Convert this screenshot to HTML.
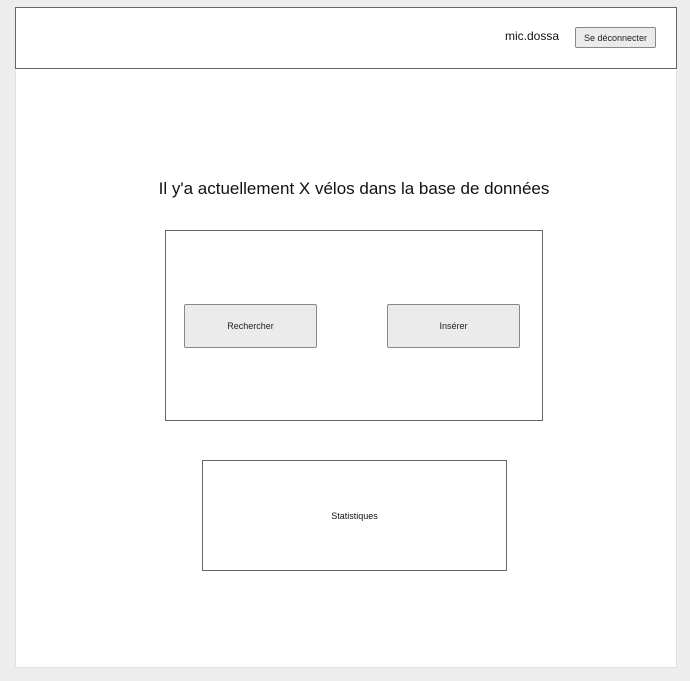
<!DOCTYPE html>
<html><head><style>
body{margin:0;width:690px;height:681px;background:#ededed;font-family:"Liberation Sans",sans-serif;position:relative;overflow:hidden}
div{position:absolute;box-sizing:border-box}
.page{left:15px;top:68px;width:662px;height:600px;background:#fff;border:1px solid #e2e2e2;border-top:none}
.hdr{left:15px;top:7px;width:662px;height:62px;background:#fff;border:1px solid #666}
.btn{background:#ebebeb;border:1px solid #888;border-radius:2px;display:flex;align-items:center;justify-content:center;color:#222}
.box{border:1px solid #666;background:#fff}
</style></head><body>
<div class="page"></div>
<div class="hdr"></div>
<div style="left:505px;top:29px;font-size:12px;color:#111">mic.dossa</div>
<div class="btn" style="left:575px;top:27px;width:81px;height:21px;font-size:9px">Se déconnecter</div>
<div style="left:0;width:708px;top:179px;text-align:center;font-size:17px;color:#111">Il y'a actuellement X vélos dans la base de données</div>
<div class="box" style="left:165px;top:230px;width:378px;height:191px"></div>
<div class="btn" style="left:184px;top:304px;width:133px;height:44px;font-size:9px">Rechercher</div>
<div class="btn" style="left:387px;top:304px;width:133px;height:44px;font-size:9px">Insérer</div>
<div class="box" style="left:202px;top:460px;width:305px;height:111px;display:flex;align-items:center;justify-content:center;font-size:9px;color:#111">Statistiques</div>
</body></html>
